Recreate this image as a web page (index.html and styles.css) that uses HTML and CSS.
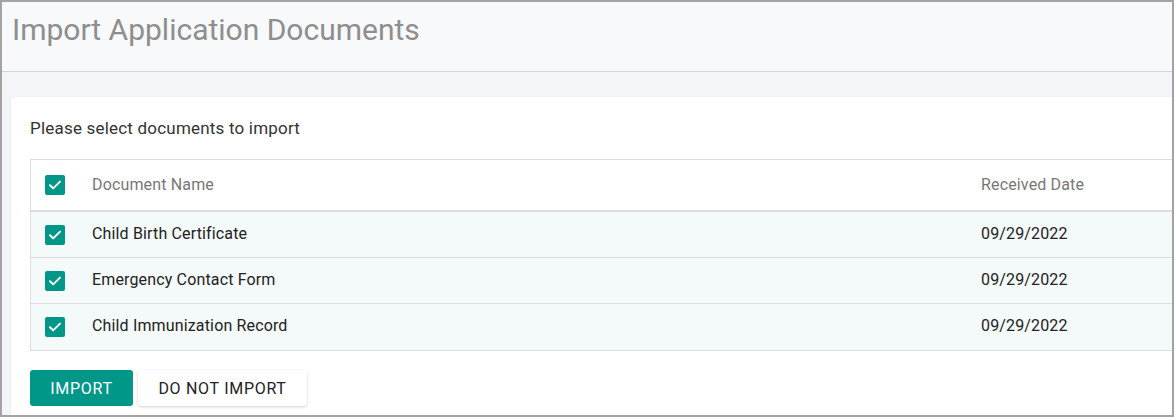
FILE: index.html
```html
<!DOCTYPE html>
<html>
<head>
<meta charset="utf-8">
<link rel="stylesheet" href="styles.css">
</head>
<body>
<div class="frame">
  <header class="page-header">
    <h1 class="title">Import Application Documents</h1>
  </header>
  <main class="page-body">
    <section class="card">
      <p class="intro">Please select documents to import</p>
      <div class="table">
        <div class="row head">
          <div class="cell check"><span class="cb"><svg viewBox="0 0 20 20"><path d="M5 10.2l3.2 3.2L15 6.6" /></svg></span></div>
          <div class="cell name">Document Name</div>
          <div class="cell date">Received Date</div>
        </div>
        <div class="row item">
          <div class="cell check"><span class="cb"><svg viewBox="0 0 20 20"><path d="M5 10.2l3.2 3.2L15 6.6" /></svg></span></div>
          <div class="cell name">Child Birth Certificate</div>
          <div class="cell date">09/29/2022</div>
        </div>
        <div class="row item">
          <div class="cell check"><span class="cb"><svg viewBox="0 0 20 20"><path d="M5 10.2l3.2 3.2L15 6.6" /></svg></span></div>
          <div class="cell name">Emergency Contact Form</div>
          <div class="cell date">09/29/2022</div>
        </div>
        <div class="row item last">
          <div class="cell check"><span class="cb"><svg viewBox="0 0 20 20"><path d="M5 10.2l3.2 3.2L15 6.6" /></svg></span></div>
          <div class="cell name">Child Immunization Record</div>
          <div class="cell date">09/29/2022</div>
        </div>
      </div>
      <div class="actions">
        <button class="btn primary">Import</button>
        <button class="btn secondary">Do Not Import</button>
      </div>
    </section>
  </main>
</div>
</body>
</html>
```
FILE: styles.css
```css
* { box-sizing: border-box; }
html, body { margin: 0; padding: 0; }
body {
  font-family: Roboto, "Liberation Sans", Arial, sans-serif;
  background: #ffffff;
}
.frame {
  width: 1174px;
  height: 417px;
  border: 2px solid #a3a3a3;
  overflow: hidden;
  background: #f3f5f9;
}
.page-header {
  height: 70px;
  background: #f8f9fb;
  border-bottom: 1px solid #ccd8e0;
  padding: 12px 0 0 10px;
}
.title {
  margin: 0;
  font-weight: 400;
  font-size: 30px;
  line-height: 32px;
  color: #8e8e8e;
}
.page-body {
  padding: 25px 0 0 9px;
}
.card {
  width: 1200px;
  height: 340px;
  background: #ffffff;
  border-radius: 4px;
  box-shadow: 0 1px 3px rgba(0,0,0,0.08);
  padding: 20px 0 0 19px;
}
.intro {
  margin: 0;
  font-size: 17px;
  line-height: 22px;
  letter-spacing: 0.2px;
  color: #333333;
}
.table {
  margin-top: 20px;
  width: 1160px;
  border: 1px solid #dedede;
}
.row {
  display: flex;
  align-items: center;
  height: 46px;
  border-bottom: 1px solid #dedede;
  background: #f4f9f9;
}
.row.head {
  height: 52px;
  background: #ffffff;
  border-bottom: 2px solid #dedede;
}
.row.last { border-bottom: none; }
.cell {
  font-size: 16px;
  line-height: 20px;
  letter-spacing: 0.15px;
  color: #222222;
}
.row.item .cell.name, .row.item .cell.date { padding-bottom: 2px; }
.head .cell { color: #777777; }
.cell.check {
  width: 61px;
  padding-left: 14px;
  display: flex;
  align-items: center;
}
.cell.name { width: 889px; }
.cell.date { flex: 1; }
.cb {
  width: 20px;
  height: 20px;
  border-radius: 2px;
  background: #009688;
  display: inline-flex;
}
.cb svg {
  width: 20px;
  height: 20px;
}
.cb path {
  fill: none;
  stroke: #ffffff;
  stroke-width: 2;
  stroke-linecap: round;
  stroke-linejoin: round;
}
.actions {
  display: flex;
  gap: 5px;
  margin-top: 19px;
}
.btn {
  height: 36px;
  border: none;
  border-radius: 3px;
  font-family: Roboto, "Liberation Sans", Arial, sans-serif;
  font-size: 16px;
  text-transform: uppercase;
  letter-spacing: 0.7px;
  padding: 0;
}
.btn.primary {
  background: #009688;
  color: #ffffff;
  width: 103px;
}
.btn.secondary {
  background: #ffffff;
  color: #222222;
  width: 169px;
  box-shadow: 0 1px 3px rgba(0,0,0,0.18);
}
```
